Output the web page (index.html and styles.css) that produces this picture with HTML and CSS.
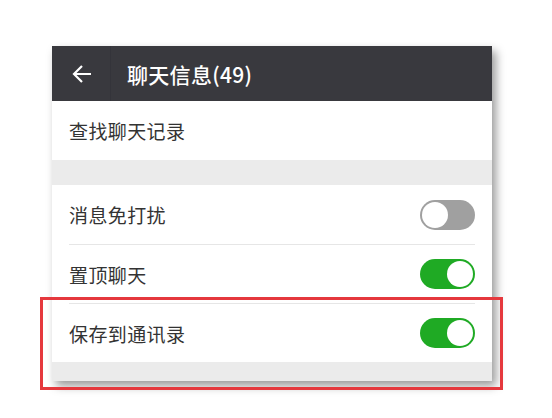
FILE: index.html
```html
<!DOCTYPE html>
<html lang="zh-CN">

<head>
    <meta charset="UTF-8" />
    <meta name="viewport" content="width=device-width, initial-scale=1.0" />
    <title>聊天信息</title>
    <link rel="stylesheet" href="styles.css">
</head>

<body>
    <div class="stage">
        <div class="card">
            <header class="topbar">
                <span class="back">
                    <svg width="22" height="22" viewBox="0 0 22 22">
                        <path d="M20 11H3M11 3L3 11l8 8" fill="none" stroke="#fff" stroke-width="2.2" stroke-linecap="butt" />
                    </svg>
                </span>
                <h1>聊天信息(49)</h1>
            </header>

            <div class="row">
                <span class="label">查找聊天记录</span>
            </div>

            <div class="gap"></div>

            <div class="group">
                <div class="row">
                    <span class="label">消息免打扰</span>
                    <span class="switch"></span>
                </div>
                <div class="row">
                    <span class="label">置顶聊天</span>
                    <span class="switch on"></span>
                </div>
                <div class="row">
                    <span class="label">保存到通讯录</span>
                    <span class="switch on"></span>
                </div>
            </div>

            <div class="gap bottom"></div>
        </div>
        <div class="highlight"></div>
    </div>
</body>

</html>
```

FILE: styles.css
```css
:root {
    --bar-color: #39393e;
    --text-color: #333333;
    --gap-color: #ebebeb;
    --line-color: #e6e6e6;
    --green: #1faa24;
    --grey: #a0a0a0;
    --mark: #e5383d;
}

* {
    box-sizing: border-box;
    margin: 0;
    padding: 0;
}

body {
    font-family: "Noto Sans CJK SC", "Noto Sans", sans-serif;
    background-color: #ffffff;
    color: var(--text-color);
}

.stage {
    position: relative;
    padding: 46px 0 0 52px;
    height: 418px;
}

.card {
    width: 440px;
    background-color: #ffffff;
    box-shadow: 4px 5px 9px rgba(0, 0, 0, 0.4);
}

.topbar {
    height: 55px;
    background-color: var(--bar-color);
    display: flex;
    align-items: center;
    color: #ffffff;
}

.back {
    width: 59px;
    height: 55px;
    display: flex;
    align-items: center;
    justify-content: center;
    padding-left: 2px;
    border-right: 1px solid #34343a;
}

.topbar h1 {
    font-size: 21px;
    font-weight: 500;
    margin-left: 16px;
    letter-spacing: 0.3px;
}

.row {
    height: 59px;
    display: flex;
    align-items: center;
    justify-content: space-between;
    padding: 0 17px 0 17px;
}

.label {
    font-size: 19px;
    letter-spacing: 0.4px;
}

.group .row + .row {
    border-top: 1px solid var(--line-color);
}

.group .row {
    margin: 0 17px;
    padding: 0;
}

.gap {
    height: 25px;
    background-color: var(--gap-color);
}

.gap.bottom {
    height: 19px;
}

.switch {
    position: relative;
    width: 55px;
    height: 30px;
    border-radius: 15px;
    background-color: var(--grey);
}

.switch::after {
    content: "";
    position: absolute;
    top: 2px;
    left: 2px;
    width: 26px;
    height: 26px;
    border-radius: 50%;
    background-color: #ffffff;
}

.switch.on {
    background-color: var(--green);
}

.switch.on::after {
    left: auto;
    right: 2px;
}

.highlight {
    position: absolute;
    left: 40px;
    top: 297px;
    width: 463px;
    height: 93px;
    border: 3px solid var(--mark);
}
```
